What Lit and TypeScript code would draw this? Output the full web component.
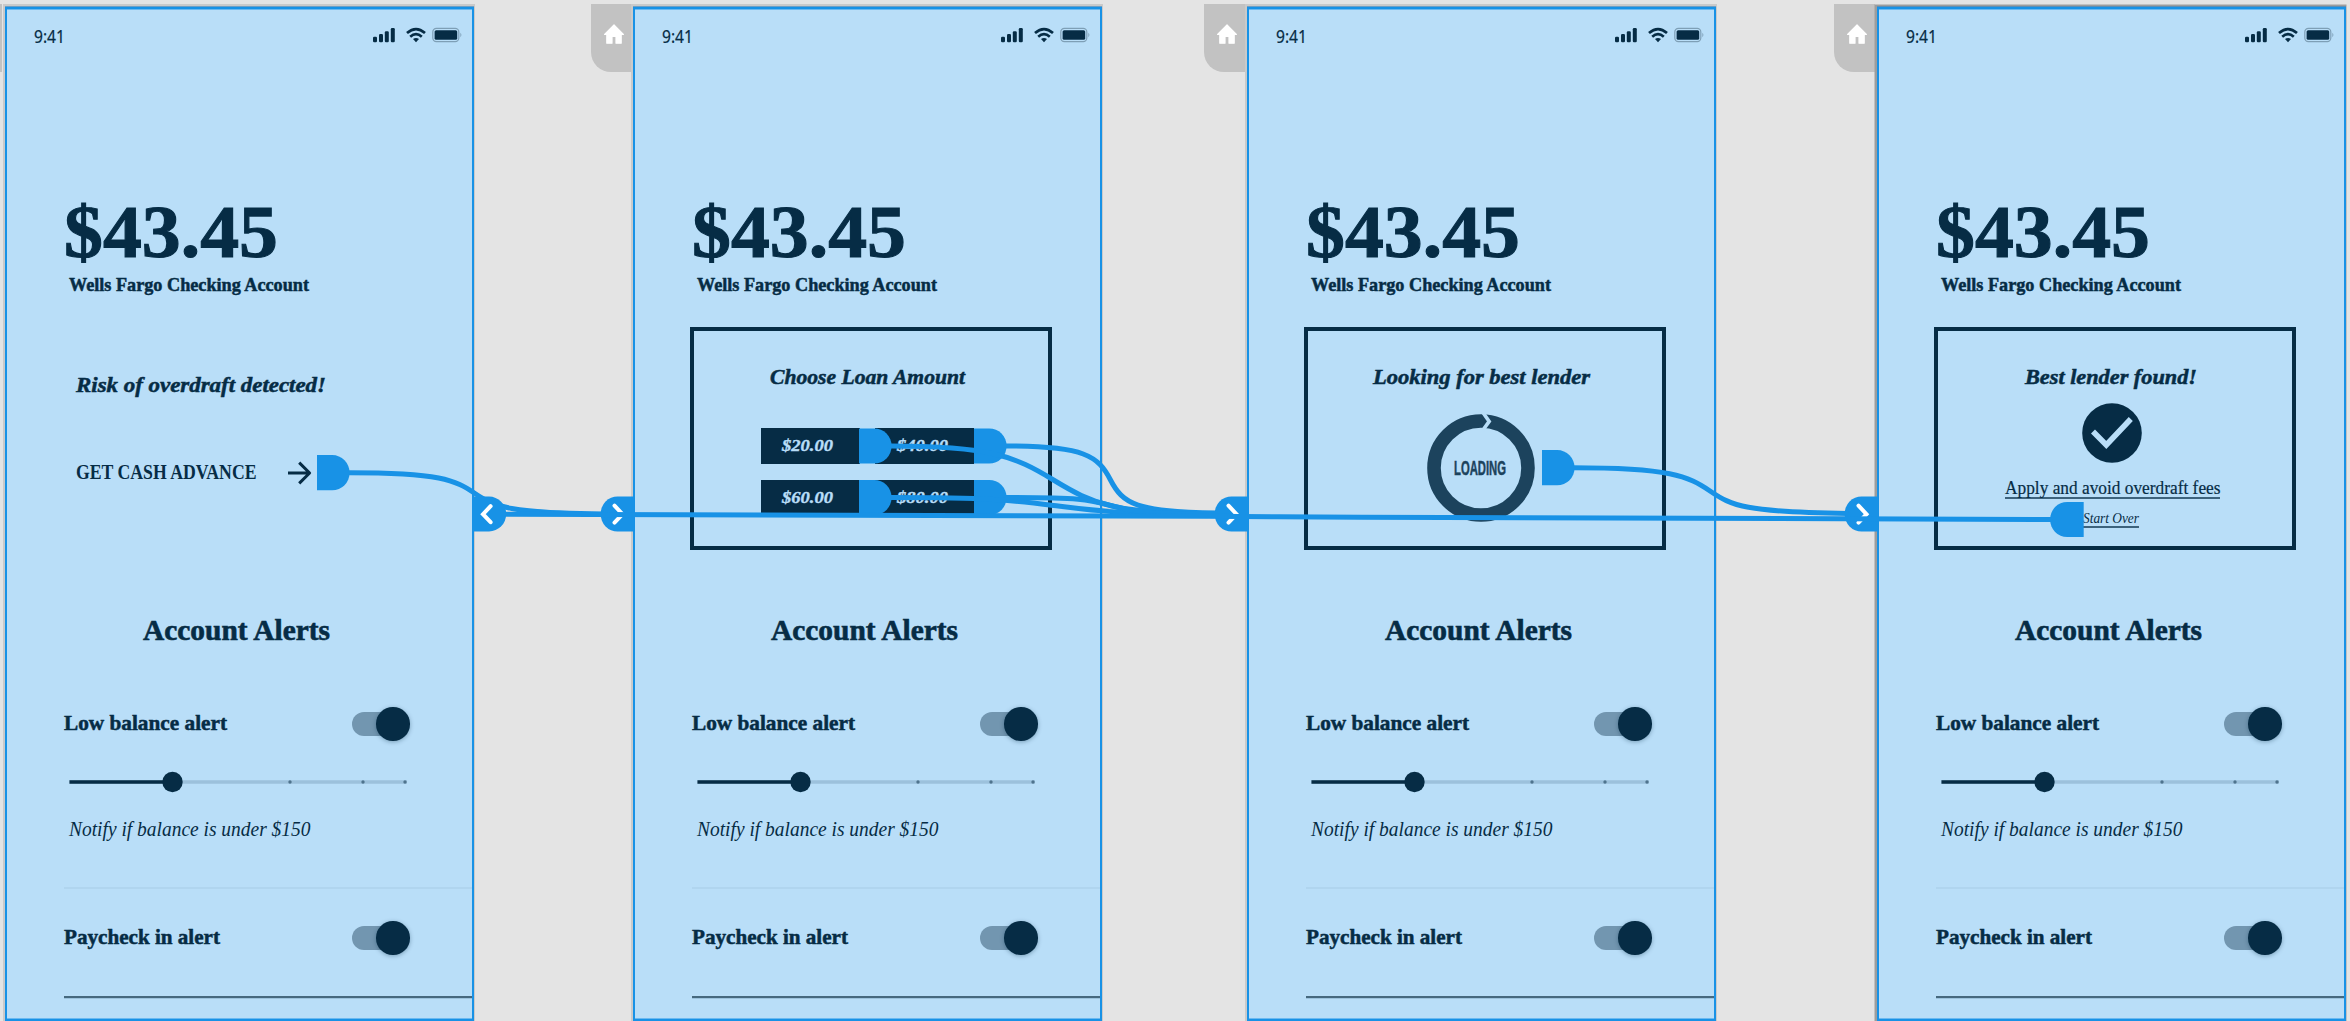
import { LitElement, html, svg, css, nothing } from "lit";
import { customElement, property, query } from "lit/decorators.js";

/** One line of text whose advance is stretched or condensed to a set width. */
@customElement("fit-text")
export class FitText extends LitElement {
  @property({ type: Number }) w = 100;
  @query(".line") line!: HTMLElement;

  static styles = css`
    :host { display: block; flex: none; line-height: 1; white-space: nowrap; }
    .line { display: inline-block; vertical-align: top; transform-origin: 0 50%; line-height: 1; }
  `;

  updated() {
    this.style.width = `${this.w}px`;
    this.line.style.transform = "none";
    const natural = this.line.getBoundingClientRect().width;
    if (natural > 0) this.line.style.transform = `scaleX(${this.w / natural})`;
  }

  render() {
    return html`<span class="line"><slot></slot></span>`;
  }
}

type Kind = "risk" | "loan" | "search" | "found";

@customElement("phone-frame")
export class PhoneFrame extends LitElement {
  @property() kind: Kind = "risk";

  static styles = css`
    :host {
      display: block; box-sizing: border-box; width: 469px; height: 1014px;
      border: 2px solid #1892e6; background: #b9def8; color: #062c45;
      font-family: "Liberation Serif", serif; overflow: hidden;
      box-shadow: inset 0 1px 0 #6cb9f0, inset 0 -1px 0 #6cb9f0, 0 -1px 0 0 #6f9fc4, -.5px -1.5px 0 1.5px #cacaca;
    }
    :host([kind="found"]) { box-shadow: inset 0 1px 0 #6cb9f0, inset 0 -1px 0 #6cb9f0, 0 -1px 0 0 #5f8fb4, -1px -1px 0 1.5px #9d9d9d; }
    .status { display: flex; justify-content: space-between; height: 51px; padding: 18px 10.5px 0 27px; box-sizing: border-box; }
    .time { font: 18px "Noto Sans", sans-serif; line-height: 1; -webkit-text-stroke: .2px #062c45; }
    .icons { display: block; margin-top: 0; }
    .amount { margin: 134px 0 0 57px; font-size: 75px; font-weight: 700; height: 75px; -webkit-text-stroke: 1.1px #062c45; }
    .account { margin: 6px 0 0 62px; font-size: 19.5px; font-weight: 700; height: 20px; -webkit-text-stroke: .5px #062c45; }
    .panel { box-sizing: border-box; margin: 32px 0 0 55px; width: 362px; height: 223px; border: 4px solid transparent; display: flex; flex-direction: column; align-items: center; }
    .boxed { border-color: #062c45; }
    .title { font-size: 21px; font-style: italic; font-weight: 700; height: 21px; margin: 35.5px 8px 0 0; -webkit-text-stroke: .5px #062c45; }
    .risk { align-self: flex-start; margin: 43.5px 0 0 9.5px; }
    .advance { align-self: flex-start; display: flex; align-items: center; margin: 59px 0 0 10px; gap: 31px; height: 36px; }
    .cta { font-size: 20.7px; font-weight: 700; height: 21px; margin-top: 0; }
    .grid { display: grid; grid-template-columns: 99px 99px; grid-auto-rows: 36px; column-gap: 15.5px; row-gap: 15.5px; margin: 40.5px 0 0 -7px; }
    .pay { background: #062c45; color: #b9def8; display: flex; align-items: center; justify-content: center; padding-right: 5px; }
    .pay fit-text { font-size: 17.7px; height: 18px; font-style: italic; font-weight: 700; -webkit-text-stroke: .4px #b9def8; }
    .ring { display: grid; place-items: center; width: 108px; height: 108px; margin: 26px 9px 0 0; color: #1c435d; }
    .ring svg, .ring fit-text { grid-area: 1 / 1; }
    .ring fit-text { font: 700 20px "Liberation Sans", sans-serif; height: 20px; line-height: 1; margin-right: 2px; -webkit-text-stroke: .5px #1c435d; }
    .done { margin: 15px 6px 0 0; display: block; }
    .apply { font-size: 18.5px; height: 18px; margin: 16px 5px 0 0; border-bottom: 2px solid #3c627c; -webkit-text-stroke: .2px #062c45; }
    .again { font-size: 14px; font-style: italic; height: 14px; margin: 13px 0 0 145px; border-bottom: 2px solid #3c627c; align-self: flex-start; }
    .alerts { font-size: 29px; font-weight: 700; height: 29px; margin: 66px 0 0 136px; -webkit-text-stroke: .6px #062c45; }
    .row { display: flex; justify-content: space-between; align-items: center; height: 34px; margin: 62px 62.5px 0 56.5px; }
    .label { font-size: 21px; font-weight: 700; height: 21px; margin-top: -2px; -webkit-text-stroke: .5px #062c45; }
    .toggle { width: 58px; height: 24px; border-radius: 12px; background: linear-gradient(90deg, #7296b0 0 45px, transparent 45px); display: flex; align-items: center; justify-content: flex-end; }
    .knob { width: 33.5px; height: 33.5px; flex: none; border-radius: 50%; background: #062c45; box-shadow: 0 1px 4px rgba(6, 44, 69, .35); }
    .slider { display: block; margin: 30px 0 0 61.5px; }
    .notify { font-size: 21px; font-style: italic; height: 21px; margin: 26px 0 0 61.5px; }
    .rule { height: 2px; background: #b0d5ef; margin: 46.5px 0 0 57px; }
    .second { margin-top: 32.5px; }
    .strong { height: 2px; background: #46697f; margin: 41px 0 0 57px; box-shadow: 0 1px 0 #9cc3de; }
  `;

  private panel() {
    switch (this.kind) {
      case "risk":
        return html`<div class="panel">
          <fit-text class="title risk" w="250">Risk of overdraft detected!</fit-text>
          <div class="advance">
            <fit-text class="cta" w="180.5">GET CASH ADVANCE</fit-text>
            <svg width="24" height="24" viewBox="0 0 24 24" fill="none" stroke="#062c45" stroke-width="3" stroke-linejoin="round">
              <path d="M0 12H22M11.2 1.6 21.6 12 11.2 22.4" />
            </svg>
          </div>
        </div>`;
      case "loan":
        return html`<div class="panel boxed">
          <fit-text class="title" w="195">Choose Loan Amount</fit-text>
          <div class="grid">
            ${["$20.00", "$40.00", "$60.00", "$80.00"].map(
              (v) => html`<div class="pay"><fit-text w="51">${v}</fit-text></div>`
            )}
          </div>
        </div>`;
      case "search":
        return html`<div class="panel boxed">
          <fit-text class="title" w="217">Looking for best lender</fit-text>
          <div class="ring">
            <svg width="108" height="108" viewBox="0 0 108 108">
              <circle cx="54" cy="54" r="47" fill="none" stroke="#1c435d" stroke-width="13.6" />
              <path d="M55.6 -2 62.2 7.4 55.6 16.5" fill="none" stroke="#b9def8" stroke-width="3.6" />
            </svg>
            <fit-text w="52">LOADING</fit-text>
          </div>
        </div>`;
      default:
        return html`<div class="panel boxed">
          <fit-text class="title" w="172">Best lender found!</fit-text>
          <svg class="done" width="60" height="60" viewBox="0 0 60 60">
            <circle cx="30" cy="30" r="29.8" fill="#062c45" />
            <path d="M11 28.5 24.3 42 48.8 16" fill="none" stroke="#b9def8" stroke-width="5.6" />
          </svg>
          <fit-text class="apply" w="215.5">Apply and avoid overdraft fees</fit-text>
          <fit-text class="again" w="56">Start Over</fit-text>
        </div>`;
    }
  }

  private toggle() {
    return html`<div class="toggle"><div class="knob"></div></div>`;
  }

  render() {
    return html`
      <div class="status">
        <fit-text class="time" w="31">9:41</fit-text>
        <svg class="icons" width="90" height="17" viewBox="0 0 90 17" fill="#062c45">
          <rect x="1" y="9.8" width="4" height="5.4" rx="1.2" />
          <rect x="7" y="7" width="4" height="8.2" rx="1.2" />
          <rect x="12.8" y="4.2" width="4" height="11" rx="1.2" />
          <rect x="18.8" y="1" width="4" height="14.2" rx="1.2" />
          <g fill="none" stroke="#062c45" stroke-width="2.7">
            <path d="M35 6.1Q44 -1.9 53 6.1" />
            <path d="M38.2 9.7Q44 4.7 49.8 9.7" />
          </g>
          <path d="M41 12Q44 9.8 47 12L44 15.2Z" />
          <rect x="60.8" y="1.3" width="26" height="13.4" rx="3.6" fill="none" stroke="#7e9fb6" stroke-width="1.2" />
          <rect x="62.6" y="3.2" width="22.6" height="9.6" rx="1.6" />
          <path d="M88.4 5.8Q90.4 8 88.4 10.2Z" fill="#7e9fb6" />
        </svg>
      </div>
      <fit-text class="amount" w="214">$43.45</fit-text>
      <fit-text class="account" w="240">Wells Fargo Checking Account</fit-text>
      ${this.panel()}
      <fit-text class="alerts" w="187">Account Alerts</fit-text>
      <div class="row"><fit-text class="label" w="163">Low balance alert</fit-text>${this.toggle()}</div>
      <svg class="slider" width="340" height="22" viewBox="0 0 340 22">
        <path d="M0 11H338" stroke="#9cc1dc" stroke-width="3.6" />
        <path d="M0.5 11H100" stroke="#062c45" stroke-width="3.4" />
        ${[221, 294, 336].map((x) => svg`<circle cx=${x} cy="11" r="1.7" fill="#4f748e" />`)}
        <circle cx="103.5" cy="11" r="10.2" fill="#062c45" />
      </svg>
      <fit-text class="notify" w="241.5">Notify if balance is under $150</fit-text>
      <div class="rule"></div>
      <div class="row second"><fit-text class="label" w="156">Paycheck in alert</fit-text>${this.toggle()}</div>
      <div class="strong"></div>
    `;
  }
}

@customElement("app-root")
export class AppRoot extends LitElement {
  static styles = css`
    :host { display: block; width: 2350px; height: 1021px; background: #e4e4e4; }
    .canvas { position: relative; width: 2350px; height: 1021px; overflow: hidden; }
    phone-frame { position: absolute; top: 7px; }
    .f1 { left: 5px; }
    .f2 { left: 633px; }
    .f3 { left: 1247px; }
    .f4 { left: 1877px; }
    .tab { position: absolute; top: 4px; width: 41px; height: 68px; background: #c2c2c2; border-radius: 0 0 0 20px; }
    .tab svg { display: block; margin: 20px 0 0 12px; }
    .h1 { left: -39px; }
    .h2 { left: 591px; }
    .h3 { left: 1204px; }
    .h4 { left: 1834px; }
    .wires { position: absolute; left: 0; top: 0; }
  `;

  private home(cls: string) {
    return html`<div class="tab ${cls}">
      <svg width="22" height="20" viewBox="0 0 22 20">
        <path d="M11 0.8 20.4 10.4H18.2V19.2H13V12.4H9V19.2H3.8V10.4H1.6Z" fill="#fff" stroke="#fff" stroke-width="1.2" stroke-linejoin="round" />
      </svg>
    </div>`;
  }

  /** Connector handle, flat on its left side and rounded on its right. */
  private out(x: number, y: number) {
    return svg`<path d="M${x} ${y - 17.6}h15.2a17.4 17.6 0 0 1 0 35.2h-15.2z" />`;
  }

  /** Connector handle, rounded on its left side; the chevron is optional. */
  private inn(x: number, y: number, chevron = true) {
    return svg`<path d="M${x + 33.2} ${y - 17.6}h-16.6a17 17.6 0 0 0 0 35.2h16.6z" />
      ${chevron
        ? svg`<path d="M${x + 13.5} ${y - 8.4}l8 8.6-8 8.4" fill="none" stroke="#fff" stroke-width="4" stroke-linecap="round" />`
        : nothing}`;
  }

  render() {
    return html`
      <div class="canvas">
        ${["h1", "h2", "h3", "h4"].map((c) => this.home(c))}
        <phone-frame class="f1" kind="risk"></phone-frame>
        <phone-frame class="f2" kind="loan"></phone-frame>
        <phone-frame class="f3" kind="search"></phone-frame>
        <phone-frame class="f4" kind="found"></phone-frame>
        <svg class="wires" width="2350" height="1021" viewBox="0 0 2350 1021" fill="#1892e6">
          ${this.inn(601, 514)} ${this.inn(1215, 514)} ${this.inn(1845, 514)} ${this.inn(2050.5, 519.5, false)}
          ${this.out(317, 472.7)} ${this.out(859, 446)} ${this.out(974, 446)}
          ${this.out(859, 497.5)} ${this.out(974, 497.5)} ${this.out(1542, 467.7)}
          <g fill="none" stroke="#1892e6" stroke-width="5">
            <path d="M349 472.7C440 472.7 455 480 475 493.5S510 513 604 514" />
            <path d="M891 446C990 446 1014 456 1053.5 480S1115 514 1217 514" />
            <path d="M1006 446C1085 446 1098 456 1110.5 480S1136 512 1217 513" />
            <path d="M891 497.5C990 497.5 1010 500 1053.5 505.5S1115 514 1217 514" />
            <path d="M1006 497.5C1085 497.5 1090 500 1111 505.5S1140 514 1217 514" />
            <path d="M1573 467.7C1670 467.7 1688 476 1710 491S1745 512 1848 513.4" />
            <path d="M2053 519.5C1700 519 1500 518 1278 516.7S850 514.2 505 514.2" />
          </g>
          <path d="M473 496.6h16a17.2 17.4 0 0 1 0 34.8h-16z" />
          <path d="M490.6 506.2l-7.6 8 7.6 8" fill="none" stroke="#fff" stroke-width="4" stroke-linecap="round" />
        </svg>
      </div>
    `;
  }
}
